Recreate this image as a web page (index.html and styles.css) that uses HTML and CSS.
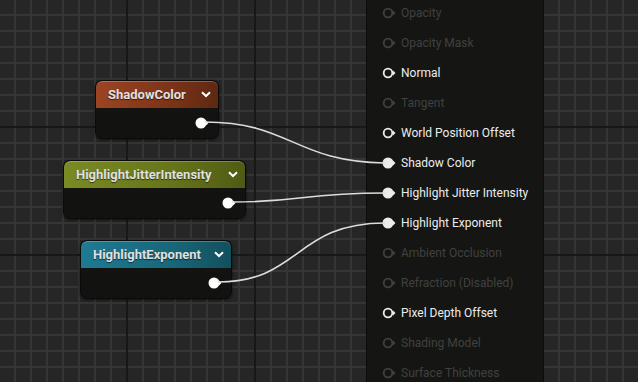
FILE: index.html
```html
<!DOCTYPE html>
<html lang="en">
<head>
    <meta charset="UTF-8">
    <title>Material Graph</title>
    <link rel="stylesheet" href="styles.css">
</head>
<body>
    <div class="graph">
        <!-- Parameter nodes -->
        <div class="node node-shadow">
            <div class="node-header">
                <span class="node-title">ShadowColor</span>
                <svg class="chevron" width="10" height="7" viewBox="0 0 10 7"><path d="M1 1.2 L5 5 L9 1.2" fill="none" stroke="#fff" stroke-width="2"/></svg>
            </div>
            <div class="node-body">
                <svg class="out-pin" width="14" height="12" viewBox="0 0 14 12"><circle cx="6" cy="6" r="5.5" fill="#fff"/><path d="M11 3.5 L13.5 6 L11 8.5 Z" fill="#fff"/></svg>
            </div>
        </div>

        <div class="node node-jitter">
            <div class="node-header">
                <span class="node-title">HighlightJitterIntensity</span>
                <svg class="chevron" width="10" height="7" viewBox="0 0 10 7"><path d="M1 1.2 L5 5 L9 1.2" fill="none" stroke="#fff" stroke-width="2"/></svg>
            </div>
            <div class="node-body">
                <svg class="out-pin" width="14" height="12" viewBox="0 0 14 12"><circle cx="6" cy="6" r="5.5" fill="#fff"/><path d="M11 3.5 L13.5 6 L11 8.5 Z" fill="#fff"/></svg>
            </div>
        </div>

        <div class="node node-exponent">
            <div class="node-header">
                <span class="node-title">HighlightExponent</span>
                <svg class="chevron" width="10" height="7" viewBox="0 0 10 7"><path d="M1 1.2 L5 5 L9 1.2" fill="none" stroke="#fff" stroke-width="2"/></svg>
            </div>
            <div class="node-body">
                <svg class="out-pin" width="14" height="12" viewBox="0 0 14 12"><circle cx="6" cy="6" r="5.5" fill="#fff"/><path d="M11 3.5 L13.5 6 L11 8.5 Z" fill="#fff"/></svg>
            </div>
        </div>

        <!-- Material result node -->
        <div class="result">
            <div class="pin-row off"><svg class="pin" width="14" height="12" viewBox="0 0 14 12"><circle cx="6" cy="6" r="4.3" fill="none" stroke="currentColor" stroke-width="1.8"/><path d="M11 3.5 L13.5 6 L11 8.5 Z" fill="currentColor"/></svg><span>Opacity</span></div>
            <div class="pin-row off"><svg class="pin" width="14" height="12" viewBox="0 0 14 12"><circle cx="6" cy="6" r="4.3" fill="none" stroke="currentColor" stroke-width="1.8"/><path d="M11 3.5 L13.5 6 L11 8.5 Z" fill="currentColor"/></svg><span>Opacity Mask</span></div>
            <div class="pin-row"><svg class="pin" width="14" height="12" viewBox="0 0 14 12"><circle cx="6" cy="6" r="4.3" fill="none" stroke="currentColor" stroke-width="1.8"/><path d="M11 3.5 L13.5 6 L11 8.5 Z" fill="currentColor"/></svg><span>Normal</span></div>
            <div class="pin-row off"><svg class="pin" width="14" height="12" viewBox="0 0 14 12"><circle cx="6" cy="6" r="4.3" fill="none" stroke="currentColor" stroke-width="1.8"/><path d="M11 3.5 L13.5 6 L11 8.5 Z" fill="currentColor"/></svg><span>Tangent</span></div>
            <div class="pin-row"><svg class="pin" width="14" height="12" viewBox="0 0 14 12"><circle cx="6" cy="6" r="4.3" fill="none" stroke="currentColor" stroke-width="1.8"/><path d="M11 3.5 L13.5 6 L11 8.5 Z" fill="currentColor"/></svg><span>World Position Offset</span></div>
            <div class="pin-row"><svg class="pin" width="14" height="12" viewBox="0 0 14 12"><circle cx="6" cy="6" r="5.5" fill="currentColor"/><path d="M11 3.5 L13.5 6 L11 8.5 Z" fill="currentColor"/></svg><span>Shadow Color</span></div>
            <div class="pin-row"><svg class="pin" width="14" height="12" viewBox="0 0 14 12"><circle cx="6" cy="6" r="5.5" fill="currentColor"/><path d="M11 3.5 L13.5 6 L11 8.5 Z" fill="currentColor"/></svg><span>Highlight Jitter Intensity</span></div>
            <div class="pin-row"><svg class="pin" width="14" height="12" viewBox="0 0 14 12"><circle cx="6" cy="6" r="5.5" fill="currentColor"/><path d="M11 3.5 L13.5 6 L11 8.5 Z" fill="currentColor"/></svg><span>Highlight Exponent</span></div>
            <div class="pin-row off"><svg class="pin" width="14" height="12" viewBox="0 0 14 12"><circle cx="6" cy="6" r="4.3" fill="none" stroke="currentColor" stroke-width="1.8"/><path d="M11 3.5 L13.5 6 L11 8.5 Z" fill="currentColor"/></svg><span>Ambient Occlusion</span></div>
            <div class="pin-row off"><svg class="pin" width="14" height="12" viewBox="0 0 14 12"><circle cx="6" cy="6" r="4.3" fill="none" stroke="currentColor" stroke-width="1.8"/><path d="M11 3.5 L13.5 6 L11 8.5 Z" fill="currentColor"/></svg><span>Refraction (Disabled)</span></div>
            <div class="pin-row"><svg class="pin" width="14" height="12" viewBox="0 0 14 12"><circle cx="6" cy="6" r="4.3" fill="none" stroke="currentColor" stroke-width="1.8"/><path d="M11 3.5 L13.5 6 L11 8.5 Z" fill="currentColor"/></svg><span>Pixel Depth Offset</span></div>
            <div class="pin-row off"><svg class="pin" width="14" height="12" viewBox="0 0 14 12"><circle cx="6" cy="6" r="4.3" fill="none" stroke="currentColor" stroke-width="1.8"/><path d="M11 3.5 L13.5 6 L11 8.5 Z" fill="currentColor"/></svg><span>Shading Model</span></div>
            <div class="pin-row off"><svg class="pin" width="14" height="12" viewBox="0 0 14 12"><circle cx="6" cy="6" r="4.3" fill="none" stroke="currentColor" stroke-width="1.8"/><path d="M11 3.5 L13.5 6 L11 8.5 Z" fill="currentColor"/></svg><span>Surface Thickness</span></div>
        </div>

        <!-- Wires -->
        <svg class="wires" width="638" height="382" viewBox="0 0 638 382">
            <path d="M205 122 C 290 122, 295 162, 385 163"/>
            <path d="M232 202 C 305 202, 300 193, 385 193"/>
            <path d="M218 282 C 300 282, 295 223, 385 223"/>
        </svg>
    </div>
</body>
</html>
```

FILE: styles.css
```css
* {
    margin: 0;
    padding: 0;
    box-sizing: border-box;
}

body {
    background-color: #262626;
    font-family: Roboto, 'Noto Sans', sans-serif;
    overflow: hidden;
}

.graph {
    position: relative;
    width: 638px;
    height: 382px;
    overflow: hidden;
    background-color: #262626;
    background-image:
        linear-gradient(to right, transparent 126px, #181818 126px, #181818 128px),
        linear-gradient(to bottom, transparent 126px, #181818 126px, #181818 128px),
        linear-gradient(to right, transparent 14px, #353535 14px, #353535 16px),
        linear-gradient(to bottom, transparent 14px, #353535 14px, #353535 16px);
    background-size: 128px 128px, 128px 128px, 16px 16px, 16px 16px;
}

.node {
    position: absolute;
    display: flex;
    flex-direction: column;
    border-radius: 7px;
    border: 1px solid #0a0a0a;
    background-color: rgba(18, 19, 17, 0.96);
    box-shadow: 0 1px 3px rgba(0, 0, 0, 0.6);
    overflow: hidden;
}

.node-shadow {
    left: 95px;
    top: 80px;
    width: 124px;
    height: 59px;
}

.node-jitter {
    left: 63px;
    top: 160px;
    width: 183px;
    height: 59px;
}

.node-exponent {
    left: 80px;
    top: 240px;
    width: 152px;
    height: 59px;
}

.node-header {
    display: flex;
    align-items: center;
    justify-content: space-between;
    height: 27px;
    padding: 0 7px 1px 12px;
    border-radius: 6px 6px 0 0;
    box-shadow: inset 0 1px 0 rgba(255, 255, 255, 0.25);
}

.node-shadow .node-header {
    background: linear-gradient(to right, #9c4422, #7c3418 60%, #5e2812);
}

.node-jitter .node-header {
    background: linear-gradient(to right, #7a8a24, #667519 60%, #4f5b14);
}

.node-exponent .node-header {
    background: linear-gradient(to right, #1e7a93, #186779 60%, #12505e);
}

.node-title {
    font-size: 13px;
    font-weight: bold;
    color: #e0e0e0;
    text-shadow: 0 1px 1px rgba(0, 0, 0, 0.6);
}

.chevron {
    display: block;
}

.node-body {
    flex: 1;
    display: flex;
    align-items: center;
    justify-content: flex-end;
    padding: 0 9px 0 0;
}

.out-pin {
    display: block;
}

.result {
    position: absolute;
    left: 366px;
    top: -2px;
    width: 178px;
    height: 400px;
    display: flex;
    flex-direction: column;
    background-color: #151614;
    border-left: 1px solid #0c0c0c;
    border-right: 1px solid #0c0c0c;
    padding-left: 15px;
}

.pin-row {
    display: flex;
    align-items: center;
    gap: 5px;
    height: 30px;
    color: #ececec;
    font-size: 12px;
}

.pin-row.off {
    color: #40413f;
}

.pin {
    display: block;
    flex-shrink: 0;
}

.wires {
    position: absolute;
    left: 0;
    top: 0;
    pointer-events: none;
}

.wires path {
    fill: none;
    stroke: #dcdcdc;
    stroke-width: 1.6;
}
```
